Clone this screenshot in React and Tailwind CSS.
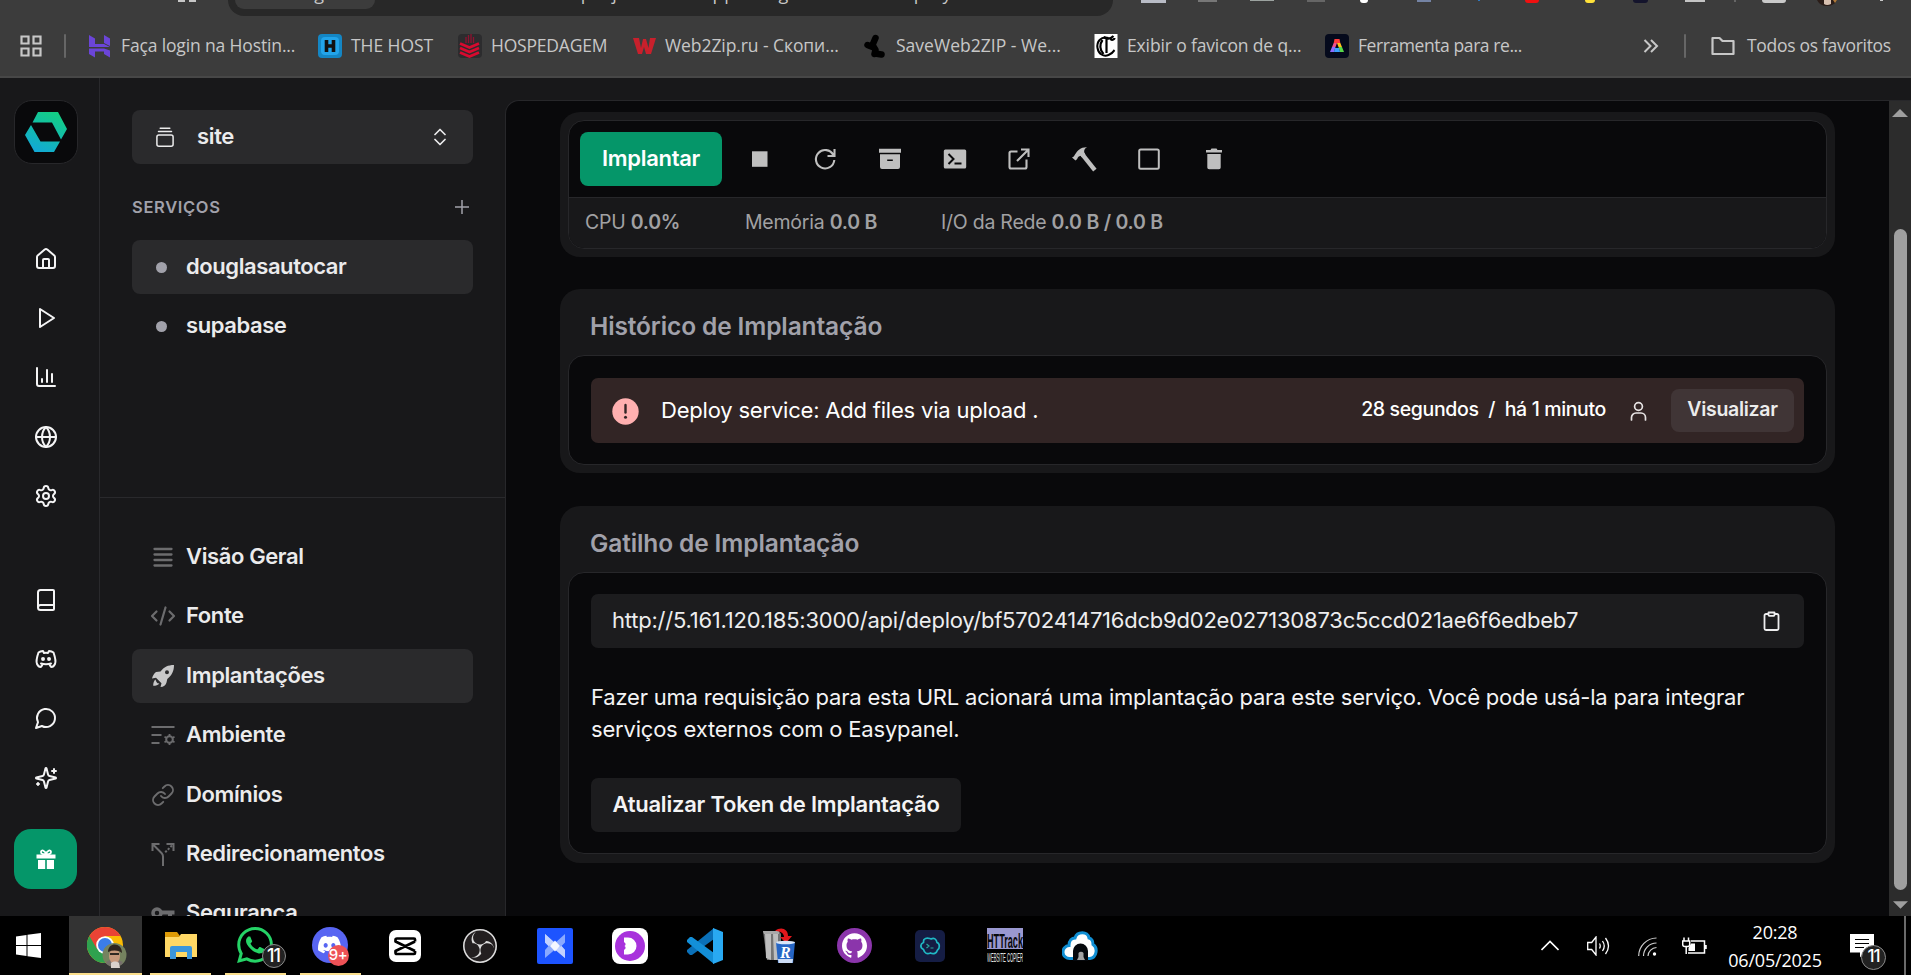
import React from "react";
import { House, ChartColumn, Globe, Settings, Book, Link } from "lucide-react";
import { TbBrandDiscord } from "react-icons/tb";
import { SiWhatsapp, SiDiscord, SiGithub, SiObsstudio } from "react-icons/si";

/* ---------- Browser chrome ---------- */

const toolbarBits = [
  "ml-[28px] w-[25px] h-[3px] bg-[#b9bcc6]",
  "ml-[32px] w-[19px] h-[2px] bg-[#777]",
  "ml-[33px] w-[24px] h-[1px] bg-[#9ca3a0]",
  "ml-[33px] w-[18px] h-[2px] bg-[#666]",
  "ml-[35px] w-[8px] h-[3px] rounded-b-full bg-white",
  "ml-[49px] w-[14px] h-[2px] bg-[#7483a4]",
  "ml-[47px] w-[2px] h-[1px] bg-[#2f78c0]",
  "ml-[45px] w-[14px] h-[3px] rounded-b-full bg-[#f01010]",
  "ml-[46px] w-[10px] h-[3px] rounded-b-full bg-[#ffe23a]",
  "ml-[38px] w-[15px] h-[3px] rounded-b-full bg-[#14142c]",
  "ml-[37px] w-[20px] h-[2px] bg-[#c4c4c4]",
  "ml-[29px] w-[2px] h-[2px] bg-[#666]",
  "ml-[26px] w-[24px] h-[3px] rounded-b bg-[#c9c9c9]",
];

const HostingerIcon = () => (
  <svg width="24" height="24" viewBox="0 0 24 24" fill="#6b45d8">
    <path d="M1 1l6 3.500v5.500h9l6 3H1zM16 1l6 3.500v7.500l-6-3zM1 14.500h15l6 2v7l-6-3.500v-2.500H7V23.500L1 20z" />
  </svg>
);
const HostIcon = () => (
  <svg width="24" height="24" viewBox="0 0 24 24">
    <rect width="24" height="24" rx="4" fill="#1486c4" />
    <rect x="3" y="3" width="18" height="18" rx="4" fill="#22a4ea" />
    <path d="M8.500 6v12M15.500 6v12M8 12h8" stroke="#111" strokeWidth="3.600" />
  </svg>
);
const HospedagemIcon = () => (
  <svg width="24" height="24" viewBox="0 0 24 24">
    <rect width="24" height="24" rx="4" fill="#2c2c2e" />
    <path d="M8 9V3M10.500 9V1M13 9V0M15.500 9V3" stroke="#8f1230" strokeWidth="1.300" />
    <path d="M2 9.500l9.500 4L21 9.500M2 14l9.500 4 9.500-4M2 18.500l9.500 4 9.500-4" stroke="#d80a2f" strokeWidth="2.700" fill="none" />
  </svg>
);
const ZipIcon = () => (
  <svg width="24" height="24" viewBox="0 0 24 24">
    <path d="M1 4h6l2 10 2-9h3l2.500 9L18 4h6l-5 16h-5l-2-7-2 7H6z" fill="#c8202c" />
  </svg>
);
const SaveIcon = () => (
  <svg width="24" height="24" viewBox="0 0 24 24" fill="none" stroke="#000" strokeWidth="6.500" strokeLinecap="round" strokeLinejoin="round">
    <path d="M12.500 4l-3 7 3 5-1 4M4.500 11l5 2M12 19.500l6.500 1" />
  </svg>
);
const GothicIcon = () => (
  <svg width="24" height="24" viewBox="0 0 23 24">
    <rect width="23" height="24" fill="#fff" />
    <path d="M14 4C6 2 2 8 3 14s6 9 11 7 5-4 6-5" stroke="#000" strokeWidth="2" fill="none" />
    <path d="M8 6c-3 4-3 10 1 14M12 5v14M9 3c4 3 8 1 10-1M16 5c2 2 4 0 4-1" stroke="#000" strokeWidth="2.200" fill="none" />
  </svg>
);
const ToolIcon = () => (
  <svg width="24" height="24" viewBox="0 0 24 24">
    <rect width="24" height="24" rx="4" fill="#050a1c" />
    <path d="M9.500 5h5l.8 4H8.700z" fill="#ff3b3b" />
    <path d="M8.700 9h3.300l-1.500 4H7z" fill="#f0508c" />
    <path d="M7 13h3.500L9 18H5z" fill="#8b6bff" />
    <path d="M12 9h3.300l1.700 4h-3.500z" fill="#ffc21a" />
    <path d="M13.500 13H17l2 5h-4z" fill="#58d94a" />
    <path d="M10 14h4l1 4H9z" fill="#3aa0ff" />
  </svg>
);

const bookmarks = [
  { Icon: HostingerIcon, label: "Faça login na Hostin...", w: "w-[230px]", t: "tracking-[-0.14px]" },
  { Icon: HostIcon, label: "THE HOST", w: "w-[140px]", t: "tracking-[-0.05px]" },
  { Icon: HospedagemIcon, label: "HOSPEDAGEM", w: "w-[174px]", t: "tracking-[-0.2px]" },
  { Icon: ZipIcon, label: "Web2Zip.ru - Скопи...", w: "w-[231px]", t: "tracking-[-0.08px]" },
  { Icon: SaveIcon, label: "SaveWeb2ZIP - We...", w: "w-[231px]", t: "tracking-[0.02px]" },
  { Icon: GothicIcon, label: "Exibir o favicon de q...", w: "w-[231px]", t: "tracking-[-0.14px]" },
  { Icon: ToolIcon, label: "Ferramenta para re...", w: "w-[230px]", t: "tracking-[-0.42px]" },
];

function BrowserBar() {
  return (
    <header className="flex h-[78px] shrink-0 flex-col border-b-2 border-[#474747] bg-[#3c3c3c] font-['Open_Sans','Noto_Sans',sans-serif] text-[#c7c7c7]">
      <div className="flex h-[16px] items-start overflow-hidden">
        <div className="ml-[178px] h-[2px] w-[7px] bg-[#c7c7c7]" />
        <div className="ml-[4px] h-[2px] w-[7px] bg-[#c7c7c7]" />
        <div className="ml-[32px] flex h-[16px] w-[885px] items-start overflow-hidden rounded-b-[22px] bg-[#282828] pl-[7px]">
          <div className="flex h-[9px] w-[140px] items-start justify-center overflow-hidden rounded-b-[14px] bg-[#3c3c3c]">
            <span className="-mt-[20px] text-[18px] leading-[26px]">Não seguro</span>
          </div>
          <span className="-mt-[20px] ml-[22px] text-[18px] leading-[26px] tracking-[0.75px] whitespace-nowrap">
            5.161.120.185:3000/projects/site/app/douglasautocar/deployments
          </span>
        </div>
        {toolbarBits.map((c) => (
          <div key={c} className={"shrink-0 " + c} />
        ))}
        <svg className="ml-[31px] shrink-0" width="20" height="6" viewBox="0 0 20 6">
          <path d="M0 0h20q-3 6-10 6T0 0z" fill="#2b1d18" />
          <path d="M7 0h7v4q-4 2-7 0z" fill="#d8c0b0" />
          <path d="M16 0h4l-2 3z" fill="#b07a3a" />
        </svg>
        <div className="ml-[43px] h-[1px] w-[3px] shrink-0 bg-[#c9c9c9]" />
      </div>
      <div className="flex h-[60px] items-center text-[17.5px]">
        <svg className="ml-[20px]" width="22" height="22" viewBox="0 0 22 22" fill="none" stroke="#c7c7c7" strokeWidth="2.200">
          <path d="M1.500 1.500h7v7h-7zM13.500 1.500h7v7h-7zM1.500 13.500h7v7h-7zM13.500 13.500h7v7h-7z" />
        </svg>
        <div className="ml-[22px] h-[24px] w-[2px] rounded bg-[#666]" />
        <div className="ml-[22px] flex">
          {bookmarks.map(({ Icon, label, w, t }) => (
            <div key={label} className={"flex items-center gap-[9px] " + w}>
              <Icon />
              <span className={"-mt-[2px] whitespace-nowrap " + t}>{label}</span>
            </div>
          ))}
        </div>
        <svg className="ml-[88px]" width="16" height="16" viewBox="0 0 16 16" fill="none" stroke="#c7c7c7" strokeWidth="2">
          <path d="M1.500 2l6 6-6 6M8 2l6 6-6 6" />
        </svg>
        <div className="ml-[25px] h-[24px] w-[2px] rounded bg-[#666]" />
        <svg className="ml-[25px]" width="24" height="20" viewBox="0 0 24 20" fill="none" stroke="#c7c7c7" strokeWidth="2.200" strokeLinejoin="round">
          <path d="M1.500 2h7l3 3h11v13h-21z" />
        </svg>
        <span className="-mt-[2px] ml-[12px] tracking-[-0.3px] whitespace-nowrap">Todos os favoritos</span>
      </div>
    </header>
  );
}

/* ---------- Rail ---------- */

const Stroke = ({ size = 24, sw = 2, children, className }) => (
  <svg width={size} height={size} viewBox="0 0 24 24" fill="none" stroke="currentColor" strokeWidth={sw} strokeLinecap="round" strokeLinejoin="round" className={className}>
    {children}
  </svg>
);

const RailItem = ({ children }) => <div className="flex h-[59.4px] w-full items-center justify-center">{children}</div>;

function Rail() {
  return (
    <nav className="flex w-[100px] shrink-0 flex-col items-center border-r border-[#29292c] pr-[7px] text-[#f4f4f5]">
      <div className="mt-[22px] flex size-[64px] shrink-0 items-center justify-center rounded-[18px] border border-[#27272a] bg-[#09090b]">
        <svg width="42" height="40" viewBox="0 0 42 40">
          <defs>
            <linearGradient id="lg" gradientUnits="userSpaceOnUse" x1="12" y1="40" x2="30" y2="0">
              <stop offset="0" stopColor="#12a9d6" />
              <stop offset="1" stopColor="#13cf83" />
            </linearGradient>
          </defs>
          <g fill="url(#lg)">
            <path d="M13 0h20l9 17-6 10.500L27 10.500H7.500z" />
            <path d="M6 13l9.500 16.500H35L29 40H9.500L0 23z" />
          </g>
        </svg>
      </div>
      <div className="mt-[65px] flex w-full shrink-0 flex-col">
        <RailItem><House size={24} /></RailItem>
        <RailItem><Stroke><path d="M6 3l14 9-14 9z" /></Stroke></RailItem>
        <RailItem><ChartColumn size={24} /></RailItem>
        <RailItem><Globe size={24} /></RailItem>
        <RailItem><Settings size={24} /></RailItem>
      </div>
      <div className="mt-[44px] flex w-full shrink-0 flex-col">
        <RailItem><Book size={24} /></RailItem>
        <RailItem><TbBrandDiscord size={24} /></RailItem>
        <RailItem><Stroke><path d="M7.900 20A9 9 0 1 0 4 16.100L2 22Z" /></Stroke></RailItem>
        <RailItem>
          <Stroke>
            <path d="M9.937 15.500A2 2 0 0 0 8.500 14.063l-6.135-1.582a.5.5 0 0 1 0-.962L8.500 9.936A2 2 0 0 0 9.937 8.500l1.582-6.135a.5.5 0 0 1 .963 0L14.063 8.500A2 2 0 0 0 15.500 9.937l6.135 1.581a.5.5 0 0 1 0 .964L15.500 14.063a2 2 0 0 0-1.437 1.437l-1.582 6.135a.5.5 0 0 1-.963 0z" />
            <path d="M20 3v4M22 5h-4M4 17v2M5 18H3" />
          </Stroke>
        </RailItem>
      </div>
      <div className="mt-[21px] mr-[2px] flex h-[60px] w-[63px] shrink-0 items-center justify-center rounded-[17px] bg-[#059669] pl-[2px]">
        <svg width="20" height="20" viewBox="0 0 20 20" fill="#fff">
          <path d="M.5 5.500h19v4H.5zM2 11h7.200v9H2zM10.800 11H18v9h-7.200z" />
          <path d="M10 5c-1-4-5-4.500-5-2 0 2 2 2.500 5 2zM10 5c1-4 5-4.500 5-2 0 2-2 2.500-5 2z" fill="none" stroke="#fff" strokeWidth="1.800" />
        </svg>
      </div>
    </nav>
  );
}

/* ---------- Sidebar ---------- */

const RocketIcon = () => (
  <svg width="24" height="24" viewBox="0 0 24 24" fill="#c8c8c9">
    <path fillRule="evenodd" d="M23 1c-6 0-10 2-13.500 6.500L5 8c-2 1.500-3.500 4-4 6.500l4-.7 5.500 5.400L9.500 23c3 0 5.500-2 6-4.500l.8-3.500C21 11 23 7 23 1zM16 6.300a2 2 0 1 1-.01 4 2 2 0 0 1 .01-4z" />
    <path d="M4.500 15.500c-1.500 1-2.300 3.500-2.300 6.300 2.700 0 5-.8 6.200-2.300l-1.900-.2-1-1.200-.5-1.200z" />
  </svg>
);
const EnvIcon = () => (
  <svg width="24" height="24" viewBox="0 0 24 24" fill="none" stroke="currentColor" strokeWidth="2">
    <path d="M.5 4h23M.5 12h10M.5 20h8" />
    <circle cx="18.500" cy="16.500" r="3.300" strokeWidth="2" />
    <path d="M18.500 11v2M18.500 20v2M13.500 13.700l1.800 1M21.700 18.300l1.800 1M13.500 19.300l1.800-1M21.700 14.700l1.800-1" strokeWidth="1.800" />
  </svg>
);
const RedirectIcon = () => (
  <svg width="24" height="24" viewBox="0 0 24 24" fill="none" stroke="currentColor" strokeWidth="2">
    <path d="M1.500 9V2h7M2 2.500l8.500 8.500q1.500 1.500 1.500 3.500V24M22.500 9V2h-7" />
    <path d="M21 3.500l-7.500 7.500" strokeDasharray="2.200 1.500" />
  </svg>
);
const menu = [
  { label: "Visão Geral", icon: <svg width="24" height="24" viewBox="0 0 24 24" stroke="currentColor" strokeWidth="2.300" strokeLinecap="round"><path d="M3.500 4h17M3.500 9.500h17M3.500 15h17M3.500 20.500h17" /></svg> },
  { label: "Fonte", icon: <svg width="26" height="24" viewBox="0 0 26 24" fill="none" stroke="currentColor" strokeWidth="2.200" strokeLinecap="round" strokeLinejoin="round"><path d="M6.500 7.500L2 12l4.500 4.500M19.500 7.500L24 12l-4.500 4.500M15.500 3.500l-5 17" /></svg> },
  { label: "Implantações", icon: <RocketIcon />, active: true },
  { label: "Ambiente", icon: <EnvIcon /> },
  { label: "Domínios", icon: <Link size={24} strokeWidth={1.9} /> },
  { label: "Redirecionamentos", icon: <RedirectIcon /> },
  { label: "Segurança", icon: <svg width="24" height="24" viewBox="0 0 24 24" fill="none" stroke="currentColor"><circle cx="6" cy="12" r="4" strokeWidth="3.500" /><path d="M11 11.500h12.500M19 12v6" strokeWidth="4" /></svg> },
];

function Sidebar() {
  return (
    <aside className="flex w-[405px] shrink-0 flex-col overflow-hidden text-[22px] font-semibold text-[#ebebec]">
      <div className="flex h-[420px] shrink-0 flex-col border-b border-[#29292c] pr-[32px] pl-[32px]">
        <div className="mt-[32px] flex h-[54px] shrink-0 items-center rounded-[8px] bg-[#2a2a2c] pr-[27px] pl-[24px]">
          <svg width="18" height="20" viewBox="0 0 18 20" fill="none" stroke="currentColor" strokeWidth="1.500" strokeLinecap="round">
            <rect x=".9" y="8" width="16.200" height="11.200" rx="2" />
            <path d="M2.500 4.600h13M4.200 1.200h9.600" />
          </svg>
          <span className="-mt-[2px] ml-[23px] grow tracking-[-0.35px]">site</span>
          <svg width="12" height="18" viewBox="0 0 12 18" fill="none" stroke="currentColor" strokeWidth="1.700" strokeLinecap="round" strokeLinejoin="round">
            <path d="M1 6.500l5-5 5 5M1 11.500l5 5 5-5" />
          </svg>
        </div>
        <div className="mt-[27px] flex h-[32px] shrink-0 items-center justify-between pr-[4px] text-[#a1a1aa]">
          <span className="text-[16.5px] tracking-[0.65px]">SERVIÇOS</span>
          <svg width="14" height="14" viewBox="0 0 14 14" stroke="currentColor" strokeWidth="1.500"><path d="M7 0v14M0 7h14" /></svg>
        </div>
        <div className="mt-[17px] flex h-[54px] shrink-0 items-center rounded-[8px] bg-[#2a2a2c] pl-[24px]">
          <div className="size-[11px] rounded-full bg-[#a1a1aa]" />
          <span className="-mt-[2px] ml-[19px] tracking-[-0.42px]">douglasautocar</span>
        </div>
        <div className="mt-[5px] flex h-[54px] shrink-0 items-center pl-[24px]">
          <div className="size-[11px] rounded-full bg-[#a1a1aa]" />
          <span className="-mt-[2px] ml-[19px] tracking-[-0.42px]">supabase</span>
        </div>
      </div>
      <div className="flex flex-col gap-[5.4px] px-[32px] pt-[32px]">
        {menu.map((m) => (
          <div key={m.label} className={"flex h-[54px] shrink-0 items-center rounded-[8px] " + (m.active ? "bg-[#2a2a2c]" : "")}>
            <div className="flex w-[54px] shrink-0 justify-center pl-[7px] text-[#6c6c6e]">{m.icon}</div>
            <span className="-mt-[1px] tracking-[-0.38px]">{m.label}</span>
          </div>
        ))}
      </div>
    </aside>
  );
}

/* ---------- Content ---------- */

const actions = [
  <svg width="16" height="16" viewBox="0 0 16 16"><rect width="15.500" height="15.500" y=".3" fill="#bfbfbf" /></svg>,
  <svg width="24" height="24" viewBox="0 0 24 24" fill="none" stroke="#bfbfbf" strokeWidth="2.100"><path d="M20.300 8A9.200 9.200 0 1 0 21.300 13M21.500 2v7h-7" /></svg>,
  <svg width="24" height="24" viewBox="0 0 24 24"><path d="M1 1.800h22v4H1z" fill="#bfbfbf" /><path fillRule="evenodd" d="M2 7.200h20V20a2 2 0 0 1-2 2H4a2 2 0 0 1-2-2zM9.200 12.500v1.600h5.600v-1.600z" fill="#bfbfbf" /></svg>,
  <svg width="24" height="24" viewBox="0 0 24 24"><rect x=".8" y="2.500" width="22.400" height="19" rx="1.500" fill="#bfbfbf" /><path d="M5.500 7l5 5-5 5M11.500 16.500h7" stroke="#09090b" strokeWidth="2" fill="none" /></svg>,
  <svg width="24" height="24" viewBox="0 0 24 24" fill="none" stroke="#bfbfbf" strokeWidth="2.100"><path d="M10.500 4.500H4a1.500 1.500 0 0 0-1.500 1.500v14A1.500 1.500 0 0 0 4 21.500h14a1.500 1.500 0 0 0 1.500-1.500v-7.500M14 2.500h7.500V10M21 3L10 14" /></svg>,
  <svg width="26" height="26" viewBox="0 0 26 26"><path d="M1 11.500c1.500-.5 2.200-1.500 3-3C6.500 4.500 9.500 1 16 1.200c-2.500 1.300-3 3-2.800 5l1.300 2.300-3.500 3L9.500 9.800c-1.500.3-2.800 1.500-3.300 3.200l-1.700 1.500z" fill="#bfbfbf" /><path d="M12.300 9.500L22.500 22.500" stroke="#bfbfbf" strokeWidth="4.400" strokeLinecap="square" /></svg>,
  <svg width="24" height="24" viewBox="0 0 24 24" fill="none" stroke="#bfbfbf" strokeWidth="2"><rect x="2.200" y="2.500" width="19.600" height="19.200" rx="1.500" /></svg>,
  <svg width="24" height="24" viewBox="0 0 24 24" fill="#bfbfbf"><path d="M4 3h4.500l1-1.500h5l1 1.500H20v2.500H4zM5.300 7h13.400v13.500a1.800 1.800 0 0 1-1.800 1.800H7.100a1.800 1.800 0 0 1-1.800-1.800z" /></svg>,
];

const Card = ({ title, className, inner, children }) => (
  <section className={"flex shrink-0 flex-col rounded-[20px] bg-[#18181a] px-[8px] " + className}>
    {title && <h2 className="flex h-[66px] shrink-0 items-center pt-[8px] pl-[22px] text-[24.5px] font-semibold tracking-[-0.12px] text-[#a1a1aa]">{title}</h2>}
    <div className={"flex grow flex-col overflow-hidden rounded-[16px] border border-[#27272a] bg-[#09090b] " + inner}>{children}</div>
  </section>
);

function Content() {
  return (
    <main className="mt-[22px] flex grow flex-col overflow-hidden rounded-tl-[14px] border-t border-l border-[#27272a] bg-[#09090b] pr-[54px] pl-[54px]">
      <Card className="mt-[11px] h-[145px] pt-[8px] pb-[8px]" inner="">
        <div className="flex h-[77px] shrink-0 items-center border-b border-[#27272a] pl-[11px]">
          <button className="h-[54px] w-[142px] rounded-[8px] bg-[#059669] pb-[2px] text-[22px] font-semibold tracking-[-0.3px] text-white">Implantar</button>
          <div className="ml-[6px] flex">
            {actions.map((a, i) => (
              <div key={i} className="flex w-[64.75px] items-center justify-center">{a}</div>
            ))}
          </div>
        </div>
        <div className="flex grow items-center bg-[#18181a] pb-[1px] pl-[16px] text-[19.5px] tracking-[-0.24px] text-[#a1a1a3]">
          <span className="w-[160px]">CPU <b className="font-semibold">0.0%</b></span>
          <span className="w-[196px]">Memória <b className="font-semibold">0.0 B</b></span>
          <span>I/O da Rede <b className="font-semibold">0.0 B / 0.0 B</b></span>
        </div>
      </Card>

      <Card title="Histórico de Implantação" className="mt-[32px] h-[184px] pb-[8px]" inner="px-[22px] pt-[22px]">
        <div className="flex h-[65px] shrink-0 items-center rounded-[7px] bg-[#322525] pr-[10px] pl-[21px] text-white">
          <svg className="mt-[2px]" width="27" height="27" viewBox="0 0 27 27">
            <circle cx="13.500" cy="13.500" r="13.200" fill="#ffb0b0" />
            <path d="M13.500 7v7.500" stroke="#322525" strokeWidth="2.400" strokeLinecap="round" />
            <circle cx="13.500" cy="19.300" r="1.500" fill="#322525" />
          </svg>
          <span className="ml-[22px] grow text-[22px] tracking-[-0.2px]">Deploy service: Add files via upload .</span>
          <span className="-mt-[1px] text-[19.5px] font-medium tracking-[-0.36px] whitespace-pre">28 segundos  /  há 1 minuto</span>
          <svg className="ml-[24px]" width="17" height="20" viewBox="0 0 17 20" fill="none" stroke="#e6e2e2" strokeWidth="1.700" strokeLinecap="round">
            <circle cx="8.500" cy="5.500" r="3.900" />
            <path d="M1.500 19v-2.500a4.500 4.500 0 0 1 4.500-4.500h5a4.500 4.500 0 0 1 4.500 4.500V19" />
          </svg>
          <button className="ml-[24px] h-[43px] w-[123px] rounded-[8px] bg-[#403536] pb-[1px] text-[19.5px] font-semibold tracking-[-0.3px] text-[#ececec]">Visualizar</button>
        </div>
      </Card>

      <Card title="Gatilho de Implantação" className="mt-[33px] h-[357px] pb-[9px]" inner="px-[22px] pt-[21px] text-[22px]">
        <div className="flex h-[54px] shrink-0 items-center justify-between rounded-[7px] bg-[#1c1c1e] pr-[24px] pl-[21px] text-[#ededee]">
          <span className="-mt-[2px] tracking-[-0.225px]">http://5.161.120.185:3000/api/deploy/bf5702414716dcb9d02e027130873c5ccd021ae6f6edbeb7</span>
          <svg width="17" height="20" viewBox="0 0 17 20" fill="none" stroke="currentColor" strokeWidth="1.800" strokeLinejoin="round">
            <path d="M5 3H3a1.500 1.500 0 0 0-1.500 1.500v13A1.500 1.500 0 0 0 3 19h11a1.500 1.500 0 0 0 1.500-1.500v-13A1.500 1.500 0 0 0 14 3h-2" />
            <path d="M5.500 1.500h6v2.200a1.200 1.200 0 0 1-1.200 1.200H6.700a1.200 1.200 0 0 1-1.200-1.200z" />
          </svg>
        </div>
        <p className="mt-[33px] leading-[32px] tracking-[-0.2px] text-[#f4f4f5]">
          Fazer uma requisição para esta URL acionará uma implantação para este serviço. Você pode usá-la para integrar
          <br />
          serviços externos com o Easypanel.
        </p>
        <button className="mt-[33px] h-[54px] w-[370px] shrink-0 rounded-[7px] bg-[#1c1c1e] pb-[2px] text-[22px] font-semibold tracking-[-0.22px] text-[#f4f4f5]">
          Atualizar Token de Implantação
        </button>
      </Card>
    </main>
  );
}

function Scrollbar() {
  return (
    <div className="mt-[22px] flex w-[22px] shrink-0 flex-col items-center border-t border-[#27272a] bg-[#2c2c2c]">
      <svg className="mt-[8px]" width="16" height="8" viewBox="0 0 16 8" fill="#9f9f9f"><path d="M8 0l8 8H0z" /></svg>
      <div className="mt-[112px] h-[661px] w-[13px] rounded-full bg-[#9f9f9f]" />
      <svg className="mt-[11px]" width="15" height="8" viewBox="0 0 16 8" fill="#9f9f9f"><path d="M0 0h16L8 8z" /></svg>
    </div>
  );
}

/* ---------- Taskbar ---------- */

const ChromeIcon = () => (
  <svg width="40" height="46" viewBox="0 0 40 46">
    <circle cx="18" cy="20" r="18" fill="#fbbc05" />
    <path d="M18 20L2.400 11A18 18 0 0 0 18 38z" fill="#2fa24f" />
    <path d="M18 11h15.600A18 18 0 0 0 2.400 11L10 24z" fill="#ea4335" />
    <circle cx="18" cy="20" r="8.800" fill="#fff" />
    <circle cx="18" cy="20" r="7" fill="#3b7de8" />
    <circle cx="27.500" cy="30" r="12" fill="#75835f" />
    <path d="M19 38c3-5 13-5 17 0-4 5-13 5-17 0z" fill="#77706c" />
    <ellipse cx="27.500" cy="31" rx="5.500" ry="7.500" fill="#c7997c" />
    <path d="M21 27c0-10 14-10 14 1-4-3-9-3-14-1z" fill="#30251f" />
    <path d="M23 29h9" stroke="#302923" strokeWidth="2" />
    <path d="M24 38c2-2 6-2 8 0l1 5h-9z" fill="#d9d2cc" />
  </svg>
);
const FolderIcon = () => (
  <svg width="32" height="28" viewBox="0 0 32 28">
    <path d="M0 1h12l3 4v5H0z" fill="#dd9a06" />
    <path d="M0 6h14l2-3h16v23H0z" fill="#ffd865" />
    <path d="M5 28V17a2 2 0 0 1 2-2h18a2 2 0 0 1 2 2v11h-5v-7H11v7z" fill="#3b96dc" />
  </svg>
);
const CapIcon = () => (
  <svg width="32" height="32" viewBox="0 0 32 32">
    <rect width="32" height="32" rx="7" fill="#fff" />
    <path d="M26 11.500V9.500q0-1-1-1H8q-1.500 0-1.500 1.500v1.500L26 21M26 11.500L6.500 21v1.500Q6.500 24 8 24h17q1 0 1-1V21" fill="none" stroke="#000" strokeWidth="2.700" strokeLinejoin="round" />
  </svg>
);
const BlueXIcon = () => (
  <svg width="36" height="36" viewBox="0 0 36 36">
    <rect width="36" height="36" rx="2" fill="#1d54ff" />
    <path d="M8 6l10 9 10-9v8.500L24.500 18l3.500 4v8l-10-8.500L8 30v-8l3.500-4L8 14.500z" fill="#8aa9ff" />
    <path d="M8 6l10 9-6.500 3L8 14.500zM28 22v8l-10-8.500 6.500-3.500z" fill="#c3d2ff" />
    <path d="M18 12.500l5 5.500-5 5.500-5-5.500z" fill="#f5f7ff" />
  </svg>
);
const DIcon = () => (
  <svg width="36" height="36" viewBox="0 0 36 36">
    <rect width="36" height="36" rx="8" fill="#fff" />
    <circle cx="18" cy="18" r="15" fill="#a832dc" />
    <path d="M12 9.500h4a8.500 8.500 0 0 1 0 17h-4V22l1.500-1.500V19l-1-1 1-1v-1.500L12 14z" fill="#fff" />
  </svg>
);
const CodeIcon = () => (
  <svg width="36" height="36" viewBox="0 0 36 36">
    <path d="M27 0v11L5 27H3l-3-3v-2z" fill="#0a70b8" />
    <path d="M27 36V25L5 9H3l-3 3v2z" fill="#138fd8" />
    <path d="M26 0l10 4v28l-10 4z" fill="#29a9f2" />
  </svg>
);
const RevoIcon = () => (
  <svg width="36" height="36" viewBox="0 0 36 36">
    <path d="M1 3h16l2 3v26H5z" fill="#747474" />
    <path d="M3 5h6v27l-5-2zM11 5h5v27h-4z" fill="#bdbdbd" />
    <path d="M1 3h16v3H2z" fill="#a8a8a8" />
    <path d="M13 3C19-2 26 1 26 8h4l-6 7-6-6h4c0-4-4-6-9-6z" fill="#e4171c" />
    <path d="M14 14h19l-2 21H16z" fill="#2565c4" />
    <ellipse cx="23.500" cy="14.500" rx="9.500" ry="1.800" fill="#d9e6f8" />
    <path d="M16 31h15l-.5 4h-14z" fill="#ccdcf4" />
    <text x="18" y="30" fontSize="16" fontWeight="700" fontStyle="italic" fontFamily="Liberation Serif, serif" fill="#fff">R</text>
  </svg>
);
const TermiusIcon = () => (
  <svg width="30" height="32" viewBox="0 0 30 32">
    <rect width="30" height="32" rx="5" fill="#151d44" />
    <g transform="translate(0 1.500)">
      <path d="M9 8c3-3 5-1 7-.5 3-1.500 5.500 0 6 3.500 3 1 3 6 .5 7.500-1 3.500-4 4.500-7 3-4 1.500-6 0-7-3.500-4-2-3-6 0-7 0-1.500 0-2 .5-3z" fill="none" stroke="#20b8c4" strokeWidth="1.700" />
      <path d="M11.500 12.500l2.500 2-2.500 2M15.500 16.500h3" stroke="#28a99c" fill="none" strokeWidth="1.200" />
    </g>
  </svg>
);
const TrackIcon = () => (
  <svg width="36" height="36" viewBox="0 0 36 36">
    <rect width="36" height="21" fill="#9a98d0" />
    <text x="0" y="20" textLength="36" lengthAdjust="spacingAndGlyphs" fontSize="21" fontWeight="700" fontFamily="Liberation Sans, sans-serif" fill="#08080c">HTTrack</text>
    <text x="0" y="34" textLength="36" lengthAdjust="spacingAndGlyphs" fontSize="12" fontFamily="Liberation Sans, sans-serif" fill="#e4e4e4">WEBSITE COPIER</text>
  </svg>
);
const CloudIcon = () => (
  <svg width="36" height="30" viewBox="0 0 36 30">
    <path d="M8 27.500a6.500 6.500 0 0 1-1-13C7 9 10 7 13 7c2-7 13-7 14 0 4 1 4 4 4 6.500 5 3 4 13-3 14z" fill="#fff" stroke="#108fd4" strokeWidth="3" />
    <path d="M11 30V20a7.500 7.500 0 0 1 15 0v10z" fill="#05080c" />
    <path d="M15 29h8l-1.500-3v-4a3 3 0 0 0-5 0v4z" fill="#a3a3a3" />
  </svg>
);

const tasks = [
  { w: "w-[73px] bg-[#333333] border-b-2 border-[#fbdf8c]", el: <div className="-mb-[7px] ml-[3px]"><ChromeIcon /></div> },
  { w: "ml-[8px] w-[61px] border-b-2 border-[#fbdf8c]", el: <FolderIcon /> },
  {
    w: "ml-[14px] w-[61px] border-b-2 border-[#fbdf8c] pr-[2px]",
    el: <div className="relative"><SiWhatsapp size={36} color="#25d366" /><span className="absolute top-[17px] left-[25px] flex size-[24px] items-center justify-center rounded-full border border-[#8a8a8a] bg-[#222] text-[18px] font-medium tracking-[-1px] text-white">11</span></div>,
  },
  {
    w: "ml-[14px] w-[61px] border-b-2 border-[#fbdf8c] pr-[2px]",
    el: <div className="relative flex size-[36px] items-center justify-center rounded-full bg-[#5865f2]"><SiDiscord size={23} color="#fff" /><span className="absolute top-[18px] left-[16px] flex size-[21px] items-center justify-center rounded-full bg-[#ee5256] text-[15px] font-medium tracking-[-0.5px] text-white">9+</span></div>,
  },
  { w: "ml-[6px] w-[75px]", el: <CapIcon /> },
  { w: "w-[75px]", el: <div className="flex size-[34px] items-center justify-center rounded-full bg-[#231f20]"><SiObsstudio size={34} color="#dcdcdc" /></div> },
  { w: "w-[75px]", el: <BlueXIcon /> },
  { w: "w-[75px]", el: <DIcon /> },
  { w: "w-[75px]", el: <CodeIcon /> },
  { w: "w-[75px]", el: <RevoIcon /> },
  { w: "w-[75px]", el: <div className="flex size-[35px] items-center justify-center rounded-full bg-[#8b35ab]"><SiGithub size={25} color="#fff" /></div> },
  { w: "w-[75px]", el: <TermiusIcon /> },
  { w: "w-[75px]", el: <TrackIcon /> },
  { w: "w-[75px]", el: <CloudIcon /> },
];

function Taskbar() {
  return (
    <footer className="flex h-[59px] shrink-0 items-stretch bg-black">
      <div className="flex w-[69px] items-center pl-[16px]">
        <svg width="25" height="25" viewBox="0 0 25 25" fill="#fff"><path d="M0 3.500l10.500-1.500v10H0zM11.500 1.800L25 0v12H11.500zM0 13h10.500v10L0 21.500zM11.500 13H25v12l-13.500-1.800z" /></svg>
      </div>
      {tasks.map((t, i) => (
        <div key={i} className={"flex shrink-0 items-center justify-center " + t.w}>{t.el}</div>
      ))}
      <div className="flex grow items-center justify-end">
        <svg width="18" height="11" viewBox="0 0 18 11" fill="none" stroke="#fff" strokeWidth="1.600"><path d="M.5 10L9 1.500l8.500 8.500" /></svg>
        <svg className="ml-[28px]" width="23" height="20" viewBox="0 0 23 20" fill="none" stroke="#fff" strokeWidth="1.300"><path d="M.7 6.500h4L9 1v18l-4.300-5.500h-4zM12.500 7.500q1.500 2.500 0 5M15.500 5q3.500 5 0 10M18.500 2q6 8 0 16" /></svg>
        <svg className="mt-[2px] ml-[28px]" width="19" height="19" viewBox="0 0 19 19" fill="none" stroke="#cfcfcf" strokeWidth="1.200"><path d="M.7 19A18 18 0 0 1 18.500 1M5.500 19A13 13 0 0 1 18.500 6M10 19a9 9 0 0 1 8.500-8.500" /><circle cx="16.500" cy="17" r="1.700" fill="#fff" stroke="none" /></svg>
        <svg className="ml-[25px]" width="25" height="18" viewBox="0 0 25 18" fill="none" stroke="#fff" strokeWidth="1.500"><path d="M9 4h13.500v12H6M24 8v4M2 .5V4M6.500 .5V4M.7 4h7v3.500a2 2 0 0 1-2 2h-3a2 2 0 0 1-2-2zM4.200 10v7" /><path d="M9 6.500h4v7.500H6.500v-3z" fill="#fff" stroke="none" /></svg>
        <div className="ml-[18px] w-[100px] text-center font-['Open_Sans','Noto_Sans',sans-serif] text-[18px] leading-[28px] tracking-[-0.2px] text-white">
          <div>20:28</div>
          <div>06/05/2025</div>
        </div>
        <div className="relative ml-[25px] h-[24px] w-[24px]">
          <svg width="24" height="24" viewBox="0 0 24 24"><path d="M0 0h24v18.500H14l-4 5v-5H0z" fill="#fff" /><path d="M5 5.500h14M5 9.500h14M5 13.500h9" stroke="#000" strokeWidth="1.200" /></svg>
          <span className="absolute top-[11px] left-[11px] flex size-[25px] items-center justify-center rounded-full border border-[#8a8a8a] bg-[#222] text-[17px] font-medium tracking-[-1px] text-white">11</span>
        </div>
        <div className="mr-[5px] ml-[30px] h-[59px] w-[2px] bg-[#6a6a6a]" />
      </div>
    </footer>
  );
}

export default function App() {
  return (
    <div className="flex h-[975px] w-[1911px] flex-col overflow-hidden bg-[#18181a] font-['Inter',sans-serif]">
      <BrowserBar />
      <div className="flex h-[838px] shrink-0 overflow-hidden">
        <Rail />
        <Sidebar />
        <Content />
        <Scrollbar />
      </div>
      <Taskbar />
    </div>
  );
}
